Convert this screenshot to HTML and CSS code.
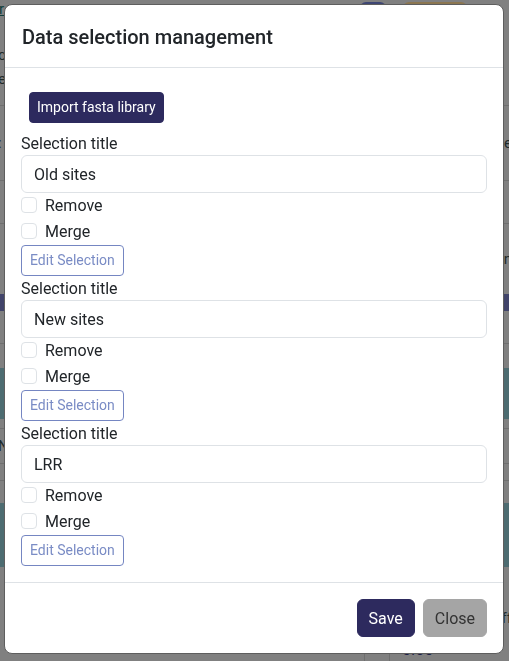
FILE: index.html
```html
<!DOCTYPE html>
<html lang="en">
<head>
<meta charset="utf-8">
<title>Data selection management</title>
<link rel="stylesheet" href="styles.css">
</head>
<body>
<div class="page">
  <div class="row top-row">
    <span class="top-link">r</span>
    <span class="pill pill-blue"></span>
    <span class="pill pill-orange"></span>
  </div>
  <div class="row r-b line"><span class="edge-text left t1">co</span><span class="edge-text left t2">e</span></div>
  <div class="row r-c line"><span class="edge-text left">:</span><span class="edge-text right">e</span></div>
  <div class="row r-d line"></div>
  <div class="row r-e"><span class="edge-text right">n</span></div>
  <div class="band band-navy"></div>
  <div class="row r-f line"></div>
  <div class="row r-g"></div>
  <div class="band band-teal1"></div>
  <div class="row r-h line"></div>
  <div class="row r-i line"><span class="edge-text left">N</span></div>
  <div class="row r-j line"></div>
  <div class="row r-k"></div>
  <div class="band band-teal2"></div>
  <div class="row r-l">
    <span class="edge-text right ff">ff</span>
    <div class="cells">
      <div class="cell-spacer"></div>
      <div class="cell cell-a"></div>
      <div class="cell cell-b">0.05</div>
    </div>
  </div>
</div>

<div class="modal">
  <div class="dialog">
    <div class="modal-header">
      <h5 class="modal-title">Data selection management</h5>
    </div>
    <div class="modal-body">
      <div class="import-wrap"><button class="btn btn-sm btn-navy import-btn">Import fasta library</button></div>

      <div class="selection">
        <label class="form-label">Selection title</label>
        <input class="form-control" type="text" value="Old sites">
        <div class="form-check"><input type="checkbox" class="form-check-input"><label class="form-check-label">Remove</label></div>
        <div class="form-check"><input type="checkbox" class="form-check-input"><label class="form-check-label">Merge</label></div>
        <button class="btn btn-sm btn-outline">Edit Selection</button>
      </div>

      <div class="selection">
        <label class="form-label">Selection title</label>
        <input class="form-control" type="text" value="New sites">
        <div class="form-check"><input type="checkbox" class="form-check-input"><label class="form-check-label">Remove</label></div>
        <div class="form-check"><input type="checkbox" class="form-check-input"><label class="form-check-label">Merge</label></div>
        <button class="btn btn-sm btn-outline">Edit Selection</button>
      </div>

      <div class="selection">
        <label class="form-label">Selection title</label>
        <input class="form-control" type="text" value="LRR">
        <div class="form-check"><input type="checkbox" class="form-check-input"><label class="form-check-label">Remove</label></div>
        <div class="form-check"><input type="checkbox" class="form-check-input"><label class="form-check-label">Merge</label></div>
        <button class="btn btn-sm btn-outline">Edit Selection</button>
      </div>
    </div>
    <div class="modal-footer">
      <button class="btn btn-navy btn-save">Save</button>
      <button class="btn btn-gray btn-close">Close</button>
    </div>
  </div>
</div>
</body>
</html>
```

FILE: styles.css
```css
* { box-sizing: border-box; }

html, body {
  margin: 0;
  padding: 0;
  width: 509px;
  height: 661px;
  overflow: hidden;
}

body {
  background: #808080;
  font-family: Roboto, "Noto Sans", Arial, sans-serif;
  color: #212529;
}

/* ---- background page (dimmed) ---- */
.page {
  display: flex;
  flex-direction: column;
  height: 661px;
}
.row {
  flex: none;
  display: flex;
  justify-content: space-between;
  align-items: center;
}
.line { border-bottom: 1px solid #6f6f6f; }
.band { flex: none; }

.top-row { height: 12px; align-items: flex-start; justify-content: flex-start; padding-top: 2px; }
.top-link { color: #0f3d3a; text-decoration: underline; font-size: 15px; line-height: 14px; margin-left: -1px; width: 361px; }
.pill { display: block; height: 14px; border-radius: 6px; }
.pill-blue { width: 26px; background: #3e4673; }
.pill-orange { width: 64px; margin-left: 17px; background: #8b7651; }

.edge-text { font-size: 15px; color: #1f2a2a; line-height: 16px; }
.edge-text.left { margin-left: -2px; }
.edge-text.right { margin-right: -3px; margin-left: auto; }

.r-b { height: 94px; flex-direction: column; align-items: flex-start; justify-content: flex-start; }
.r-b .t1 { margin-top: 35px; }
.r-b .t2 { margin-top: 8px; }
.r-c { height: 75px; }
.r-d { height: 43px; }
.r-e { height: 70px; }
.band-navy { height: 17px; background: #41446a; }
.r-f { height: 33px; }
.r-g { height: 24px; }
.band-teal1 { height: 51px; background: #4d6c71; }
.r-h { height: 10px; }
.r-i { height: 35px; }
.r-j { height: 17px; }
.r-k { height: 22px; }
.band-teal2 { height: 64px; background: #4d6c71; }
.r-l { flex: 1; flex-direction: column; align-items: stretch; justify-content: flex-start; }
.r-l .ff { margin-top: 43px; align-self: flex-end; }
.cells { display: flex; margin-top: auto; height: 30px; }
.cell-spacer { width: 364px; }
.cell { border-left: 1px solid #6f6f6f; }
.cell-a { width: 25px; }
.cell-b { flex: 1; padding: 9px 0 0 12px; font-size: 16px; color: #1c2148; }

/* ---- modal ---- */
.modal {
  position: fixed;
  inset: 0;
}
.dialog {
  margin: 4px 5px 0 4px;
  width: 500px;
  background: #fff;
  border: 1px solid #5e5e5e;
  border-radius: 8px;
  overflow: hidden;
}

.modal-header {
  padding: 16px;
  border-bottom: 1px solid #dee2e6;
}
.modal-title {
  margin: 0;
  font-size: 20px;
  font-weight: 500;
  line-height: 28px;
  padding: 2px 0 0 1px;
  color: #212529;
}

.modal-body { padding: 16px; }

.import-wrap { display: block; }
.import-btn { margin: 8px; }

.btn {
  display: inline-block;
  font-family: inherit;
  cursor: pointer;
  border: 1px solid transparent;
  font-size: 16px;
  line-height: 24px;
  padding: 7px 12px 5px;
  border-radius: 6px;
}
.btn-sm {
  font-size: 14px;
  line-height: 21px;
  padding: 4px 8px;
  border-radius: 4px;
}
.btn-navy { background: #2d2a5e; border-color: #2d2a5e; color: #fff; }
.btn-gray { background: #a5a5a5; border-color: #a5a5a5; color: #333; }
.btn-save { padding-left: 11px; padding-right: 11px; }
.btn-close { padding-left: 11px; padding-right: 11px; }
.import-btn { padding-left: 7px; padding-right: 7px; }
.btn-outline { background: #fff; border-color: #7586c2; color: #7a8cc5; display: block; }

.selection { display: flex; flex-direction: column; align-items: flex-start; }

.form-label {
  display: block;
  font-size: 16px;
  line-height: 23px;
  padding-top: 1px;
  color: #212529;
}
.form-control {
  display: block;
  width: 100%;
  padding: 7px 12px 5px;
  font-family: inherit;
  font-size: 16px;
  line-height: 24px;
  color: #212529;
  background: #fff;
  border: 1px solid #dee2e6;
  border-radius: 6px;
  margin: 0;
}
.form-check {
  min-height: 24px;
  padding-left: 24px;
  margin-bottom: 2px;
  display: block;
}
.form-check-input {
  appearance: none;
  -webkit-appearance: none;
  float: left;
  width: 16px;
  height: 16px;
  margin: 4px 0 0 -24px;
  border: 1px solid #dee2e6;
  border-radius: 4px;
  background: #fff;
}
.form-check-label {
  display: inline-block;
  font-size: 16px;
  line-height: 23px;
  padding-top: 1px;
  color: #212529;
}

.modal-footer {
  display: flex;
  justify-content: flex-end;
  align-items: center;
  padding: 12px;
  border-top: 1px solid #dee2e6;
}
.modal-footer .btn { margin: 4px; }
```
